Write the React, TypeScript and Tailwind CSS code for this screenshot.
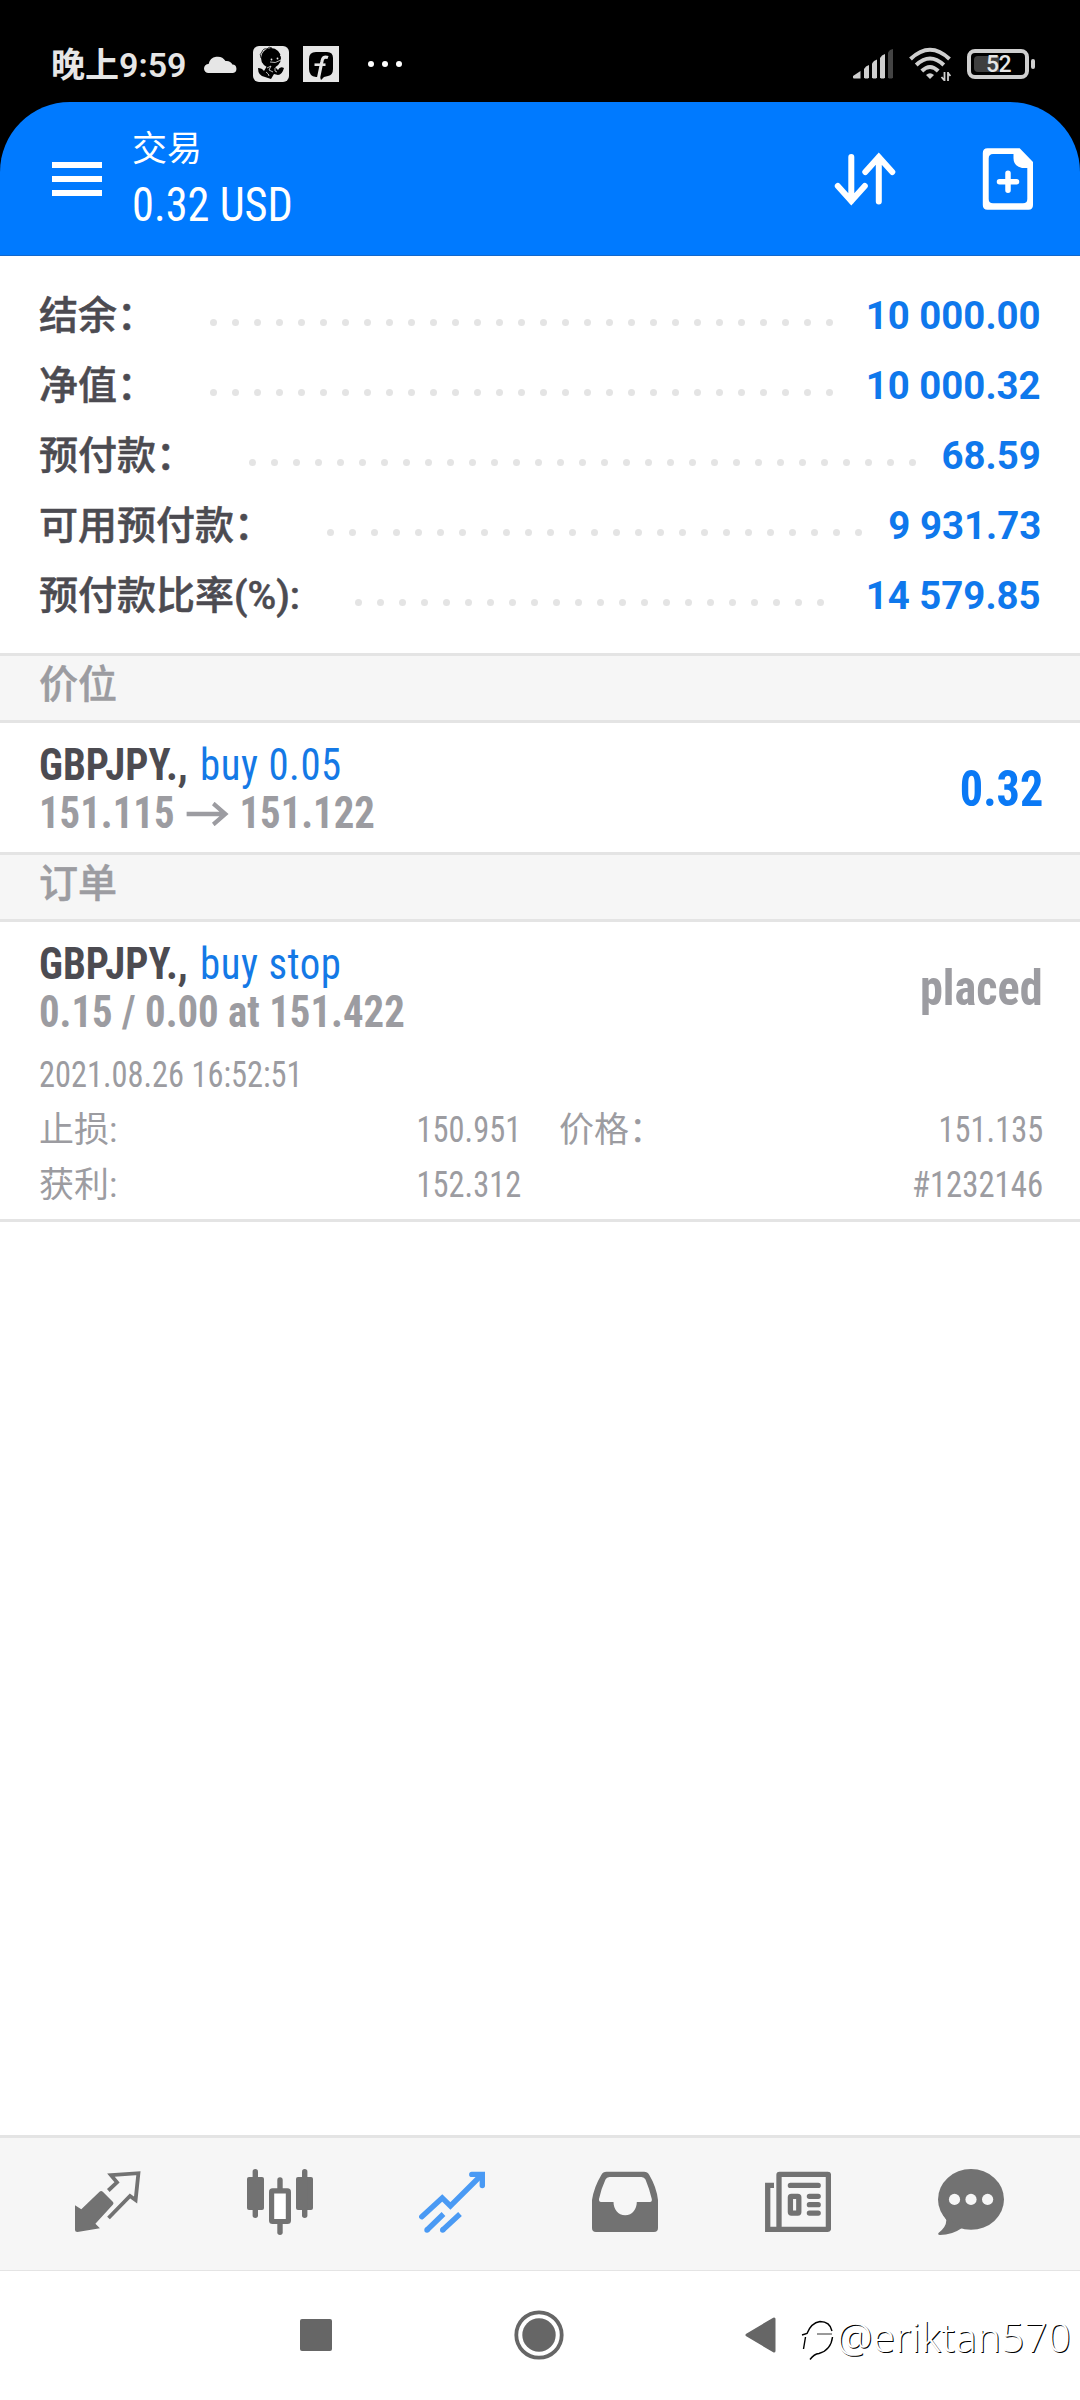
import React from 'react';

interface SummaryRow {
  label: string;
  value: string;
  dots: number;
  latin?: boolean;
}

const SUMMARY: SummaryRow[] = [
  { label: '结余：', value: '10 000.00', dots: 29 },
  { label: '净值：', value: '10 000.32', dots: 29 },
  { label: '预付款：', value: '68.59', dots: 31 },
  { label: '可用预付款：', value: '9 931.73', dots: 25 },
  { label: '预付款比率(%):', value: '14 579.85', dots: 22, latin: true },
];

const StatusBar: React.FC = () => (
  <div className="flex h-[102px] items-center bg-black pt-[26px] pr-[45px] pl-[51px] text-[#e6e6e6]">
    <span className="w-[153px] pt-0.5 text-[34px] leading-[76px] font-semibold whitespace-nowrap">晚上9:59</span>
    <svg className="h-[18px] w-[33px] shrink-0" viewBox="0 0 33 18" fill="currentColor">
      <path d="M4.5 18A4.5 4.5 0 0 1 4.6 8.9A9.3 9.3 0 0 1 21.5 6A6.6 6.6 0 0 1 28.4 9.5A4.3 4.3 0 0 1 29 18Z" />
    </svg>
    <svg className="ml-4 h-9 w-9 shrink-0" viewBox="0 0 36 36">
      <rect width="36" height="36" rx="6" fill="currentColor" />
      <circle cx="18" cy="12" r="10" fill="#000" />
      <path d="M9 16L27 15Q25 20 22 21L25 24Q27 20 31 22Q29 29 25 29L21 28L18 33L12 31Q5 30 5 22Q9 22 11 25L14 20Z" fill="#000" />
      <path d="M8 12Q6 8 9 6Q10 2 14 3Q16 0 19 2" fill="none" stroke="#000" strokeWidth="0.8" />
      <circle cx="18.5" cy="13.5" r="0.9" fill="#e6e6e6" />
      <circle cx="24.5" cy="12.5" r="0.9" fill="#e6e6e6" />
      <path d="M17 16Q22 18 28 14M27 9L30 12M14 22L18 20L16 24L20 26M13 26Q16 28 16 30M22 22Q21 26 24 26" fill="none" stroke="#e6e6e6" strokeWidth="0.8" />
    </svg>
    <svg className="ml-3.5 h-9 w-9 shrink-0" viewBox="0 0 36 36">
      <rect width="36" height="36" fill="currentColor" />
      <path d="M13 6H24Q30 6 30 12V23Q30 29 25 30L21 31L18 34L17 31H13Q6 30 6 23V13Q6 6 13 6Z" fill="#000" />
      <path d="M25 11.5Q19.5 9.5 18.8 16L15.5 32" fill="none" stroke="#e6e6e6" strokeWidth="3.2" />
      <path d="M11.5 18.7H22.5" stroke="#e6e6e6" strokeWidth="2.6" />
    </svg>
    <div className="ml-[29px] flex gap-2">
      <i className="size-1.5 rounded-full bg-white" />
      <i className="size-1.5 rounded-full bg-white" />
      <i className="size-1.5 rounded-full bg-white" />
    </div>
    <svg className="ml-auto h-[30px] w-10" viewBox="0 0 40 30" fill="#cfcfcf">
      <path d="M0 27L7.5 22V29.5H1Q0 29.5 0 28.5Z" />
      <path d="M11 20L13 17.5L16 16V28.5L15 29.5H12L11 28.5Z" />
      <path d="M19 14.5L21 12L24 10.5V28.5L23 29.5H20L19 28.5Z" />
      <path d="M27 9L29 6.5L32 5V28.5L31 29.5H28L27 28.5Z" />
      <path d="M35 3.5L37 1L40 0V28.5L39 29.5H36L35 28.5Z" fill="#444" />
    </svg>
    <svg className="ml-4 h-[34px] w-[42px]" viewBox="0 0 42 34" fill="none" stroke="#cfcfcf" strokeWidth="4">
      <path d="M1.5 12Q21 -6.5 40.5 12" />
      <path d="M7.2 18Q21 5 34.8 18" />
      <path d="M12.8 24Q21 16 29.2 24" />
      <path d="M17 28Q21 24.5 25 28L21 32Z" fill="#cfcfcf" stroke="none" />
      <path d="M35.5 25V34M32.5 30L35 33M39 34V25M41.5 29L39 26" strokeWidth="1.8" />
    </svg>
    <div className="ml-4 flex items-center gap-0.5">
      <div className="flex h-[30px] w-[62px] items-center rounded-[8px] border-4 border-[#cfcfcf] px-[3px]">
        <div className="h-4 w-[25px] rounded-l-sm bg-[#3f3f3f]" />
        <span className="-ml-[13px] text-[23px] leading-none font-medium tracking-[-0.5px] text-[#e6e6e6]">52</span>
      </div>
      <div className="h-2.5 w-1 rounded-sm bg-[#cfcfcf]" />
    </div>
  </div>
);

const Header: React.FC = () => (
  <div className="bg-black">
    <header className="flex h-[154px] rounded-t-[70px] border-b border-[#1268cc] bg-[#007aff] pl-[52px] text-white">
      <div className="flex w-[50px] flex-col gap-2 pt-[60px]">
        <i className="h-1.5 bg-white" />
        <i className="h-1.5 bg-white" />
        <i className="h-1.5 bg-white" />
      </div>
      <div className="ml-[30px] pt-7">
        <p className="text-[35px] leading-10">交易</p>
        <p className="mt-[5px] origin-left scale-x-[.925] text-[48px] leading-[60px] font-['Roboto_Condensed']">0.32 USD</p>
      </div>
      <svg className="mt-[50px] ml-auto h-[54px] w-[62px]" viewBox="0 0 62 54" fill="none" stroke="currentColor" strokeWidth="6" strokeLinecap="round">
        <path d="M17.3 5V49M3.8 34L17.3 49L30.8 34" />
        <path d="M44.8 49.5V5M31.3 20L44.8 5L58.3 20" />
      </svg>
      <svg className="mt-[46px] mr-[46px] ml-[86px] h-[62px] w-[52px]" viewBox="0 0 52 62">
        <path
          d="M5.5 0.3H37.7L51 14V57Q51 61.7 46.5 61.7H5.5Q0.8 61.7 0.8 57V5Q0.8 0.3 5.5 0.3ZM11 6Q6.7 6 6.7 10.5V51Q6.7 55.3 11 55.3H41Q45.3 55.3 45.3 51V20H40Q31.5 18 31.5 10.3V6Z"
          fill="currentColor"
          fillRule="evenodd"
        />
        <path d="M17.5 33.7H34.5M26 25.3V42.3" stroke="currentColor" strokeWidth="5.5" strokeLinecap="round" />
      </svg>
    </header>
  </div>
);

const Summary: React.FC = () => (
  <section className="px-[39px] pt-[25px] pb-[22px]">
    {SUMMARY.map((row) => (
      <div key={row.label} className="flex h-[70px] items-center text-[39px] leading-[70px] font-medium whitespace-nowrap">
        <span className="text-[#4c4b51] [-webkit-text-stroke:0.5px_#4c4b51]">{row.label}</span>
        <div className={`mt-[13px] flex gap-[15px] ${row.latin ? 'ml-[55px]' : 'ml-[54px]'}`}>
          {Array.from({ length: row.dots }, (_, i) => (
            <i key={i} className="size-[7px] rounded-full bg-[#e4e4e4]" />
          ))}
        </div>
        <span className="ml-auto origin-right scale-x-[.985] font-bold text-[#0f78ec]">{row.value}</span>
      </div>
    ))}
  </section>
);

const SectionTitle: React.FC<{ children: React.ReactNode }> = ({ children }) => (
  <h2 className="h-[70px] border-y-3 border-[#e4e4e4] bg-[#f6f6f6] px-[39px] text-[39px] leading-[59px] font-medium text-[#9c9ca1] [-webkit-text-stroke:0.5px_#9c9ca1]">
    {children}
  </h2>
);

interface DealProps {
  action: string;
  detail: React.ReactNode;
  children: React.ReactNode;
}

const Deal: React.FC<DealProps> = ({ action, detail, children }) => (
  <div className="flex h-[129px] justify-between pr-[37px] pl-[39px] font-['Roboto_Condensed']">
    <div className="origin-left scale-x-[.927] pt-[18px] text-[44px] leading-[48px] whitespace-nowrap">
      <p>
        <b className="text-[#4c4b51]">GBPJPY.,</b> <span className="ml-[3px] tracking-[0.6px] text-[#1479e6]">{action}</span>
      </p>
      <p className="flex items-center font-bold text-[#9c9ca1]">{detail}</p>
    </div>
    <div className="origin-right scale-x-[.925] pt-0.5 text-[50px] leading-[129px] font-bold">{children}</div>
  </div>
);

const OrderDetails: React.FC = () => (
  <div className="-mt-[3px] h-[171px] pr-[37px] pl-[39px] text-[36px] leading-[55px] text-[#9c9ca1] font-['Roboto_Condensed','Noto_Sans_CJK_SC',sans-serif]">
    <p className="w-max origin-left scale-x-[.9]">2021.08.26 16:52:51</p>
    <div className="flex">
      <span className="w-[260px] text-[35px]">止损:</span>
      <span className="w-[222px] text-right">
        <span className="inline-block origin-right scale-x-[.9]">150.951</span>
      </span>
      <span className="ml-[38px] text-[35px]">价格：</span>
      <span className="ml-auto origin-right scale-x-[.9]">151.135</span>
    </div>
    <div className="flex">
      <span className="w-[260px] text-[35px]">获利:</span>
      <span className="w-[222px] text-right">
        <span className="inline-block origin-right scale-x-[.9]">152.312</span>
      </span>
      <span className="ml-auto origin-right scale-x-[.91]">#1232146</span>
    </div>
  </div>
);

const TabBar: React.FC = () => (
  <nav className="flex h-[136px] justify-between border-t-3 border-b border-[#e4e4e4] bg-[#f6f6f6] pr-[76px] pl-[75px] pt-[31px] text-[#727272]">
    <svg className="h-[68px] w-[66px]" viewBox="0 0 66 68">
      <path d="M0 36.3L6.3 40.3L24.5 22.8Q26.2 21.4 27.8 22.8L38 33Q39 34.3 38 35.5L20.4 54.7L24.9 59.3L2.5 63Q0 63 0 60.5Z" fill="currentColor" />
      <path d="M33.3 21.5L42 13.3L36 6.2L63.4 4.2L60.6 31L55 27L33.5 49" fill="none" stroke="currentColor" strokeWidth="3.8" />
    </svg>
    <svg className="-ml-px h-[68px] w-[66px]" viewBox="0 0 66 68" fill="currentColor">
      <rect x="0" y="8" width="17" height="33" rx="2" />
      <rect x="5.6" y="0" width="5.4" height="49" rx="2.7" />
      <rect x="49" y="8" width="17" height="33" rx="2" />
      <rect x="55" y="0" width="5.4" height="49" rx="2.7" />
      <rect x="30.3" y="8.3" width="5.4" height="15" rx="2.7" />
      <rect x="30.3" y="50" width="5.4" height="16" rx="2.7" />
      <rect x="24.6" y="21.9" width="16.8" height="30.6" rx="1" fill="#fff" stroke="currentColor" strokeWidth="5.2" />
    </svg>
    <svg className="-ml-px h-[68px] w-[66px] text-[#4a9af4]" viewBox="0 0 66 68" fill="none" stroke="currentColor" strokeWidth="5.4">
      <path d="M2.8 47.7L23.2 28.9L31.4 37L61 7.5" strokeLinecap="round" />
      <path d="M52.8 5.4H63.3V16.5" strokeLinecap="round" />
      <path d="M8 61L24.5 45M23.7 61L41 45" />
      <path d="M8 61H8.01M23.7 61H23.71" strokeLinecap="round" />
    </svg>
    <svg className="h-[68px] w-[66px]" viewBox="0 0 66 68" fill="currentColor">
      <path
        fillRule="evenodd"
        d="M0 31Q2 18 9.3 6Q11 2.7 14.5 2.7H52Q55.5 2.7 57.3 6Q64.5 18 66 31V59Q66 63 62 63H4Q0 63 0 59ZM17.5 8Q14.6 8 13.5 10.5Q9 20 7 30Q6.8 33 9 33H21.5C21.5 40 26 46.3 33.2 46.3S44.8 40 44.8 33H58Q60.2 33 59.8 30Q57.5 20 53.5 10.5Q52.2 8 49.5 8Z"
      />
    </svg>
    <svg className="h-[68px] w-[66px]" viewBox="0 0 66 68" fill="none" stroke="currentColor" strokeWidth="5.3">
      <rect x="14" y="5.3" width="49.4" height="55" rx="0.5" />
      <path d="M9 16.3H2.7V60.3H14" />
      <path d="M25.4 16.4H53.2M44.4 27.3H53.2M44.4 35.7H53.2M44.4 44.1H53.2" strokeLinecap="round" />
      <rect x="25.4" y="27.3" width="8.4" height="16.8" rx="1" />
    </svg>
    <svg className="h-[68px] w-[66px]" viewBox="0 0 66 68">
      <ellipse cx="33" cy="30.4" rx="33" ry="30.4" fill="currentColor" />
      <path d="M5 45L8.3 51Q8.5 58 0.5 64Q-0.5 66 2 66Q14 66 24 59Z" fill="currentColor" />
      <g fill="#f6f6f6">
        <circle cx="16.5" cy="30.4" r="5.6" />
        <circle cx="33" cy="30.4" r="5.6" />
        <circle cx="49.6" cy="30.4" r="5.6" />
      </g>
    </svg>
  </nav>
);

const SystemNav: React.FC = () => (
  <div className="relative flex h-[129px] items-center bg-white pb-px pl-[300px]">
    <i className="size-8 rounded-[2px] bg-[#666]" />
    <svg className="ml-[182px] size-[50px]" viewBox="0 0 50 50">
      <circle cx="25" cy="25" r="22.7" fill="none" stroke="#666" strokeWidth="3.8" />
      <circle cx="25" cy="25" r="16.7" fill="#666" />
    </svg>
    <svg className="ml-[181px] h-[38px] w-[31px]" viewBox="0 0 31 38">
      <path d="M2 19L29 3V35Z" fill="#666" stroke="#666" strokeWidth="3" strokeLinejoin="round" />
    </svg>
    <div className="absolute right-[9px] bottom-10 flex items-start text-white">
      <svg className="mt-0.5 h-[42px] w-9" viewBox="0 0 36 42" fill="none" stroke="#000" strokeWidth="1.4">
        <path d="M1 17L6 15.5Q10 5 19 3.5Q29 3.5 31 13" />
        <path d="M16 16H31" strokeWidth="0.8" />
        <path d="M4.5 19L2.5 31M31.5 19Q30 32 18 35.5Q13 36 9 41.5" />
      </svg>
      <span className="text-[40px] leading-[42px] tracking-[0.4px] font-['Noto_Sans'] font-light [text-shadow:1px_1px_0.5px_#000]">
        @eriktan570
      </span>
    </div>
  </div>
);

export default function App() {
  return (
    <div className="flex h-[2400px] w-[1080px] flex-col overflow-hidden bg-white font-['Roboto','Noto_Sans_CJK_SC',sans-serif]">
      <StatusBar />
      <Header />
      <Summary />
      <SectionTitle>价位</SectionTitle>
      <Deal
        action="buy 0.05"
        detail={
          <>
            151.115
            <svg className="mt-0.5 mr-[11px] ml-[13px] h-6 w-[46px]" viewBox="0 0 46 24" fill="none" stroke="currentColor" strokeWidth="4.4">
              <path d="M0 12H43M29 1.5L42 12L29 22.5" />
            </svg>
            151.122
          </>
        }
      >
        <span className="text-[#0a79f5]">0.32</span>
      </Deal>
      <SectionTitle>订单</SectionTitle>
      <Deal action="buy stop" detail="0.15 / 0.00 at 151.422">
        <span className="text-[#9c9ca1]">placed</span>
      </Deal>
      <OrderDetails />
      <div className="flex-1 border-t-3 border-[#e4e4e4]" />
      <TabBar />
      <SystemNav />
    </div>
  );
}
